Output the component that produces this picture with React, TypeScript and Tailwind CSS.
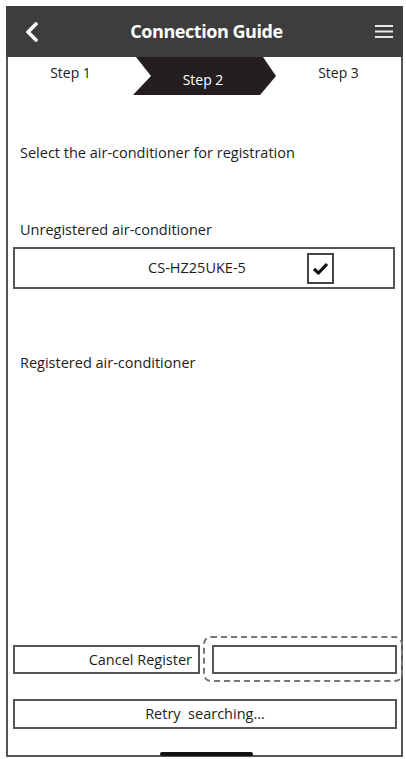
import React from "react";

const font = { fontFamily: '"Open Sans", "Noto Sans", sans-serif' };

const ChevronLeft = () => (
  <svg width="14" height="20" viewBox="0 0 14 20" fill="none">
    <polyline points="11,2 3,10 11,18" stroke="#fff" strokeWidth="3.6" strokeLinecap="round" strokeLinejoin="round" />
  </svg>
);

const Hamburger = () => (
  <svg width="20" height="15" viewBox="0 0 20 15" fill="none">
    <line x1="1" y1="2" x2="19" y2="2" stroke="#e6e6e6" strokeWidth="2" />
    <line x1="1" y1="7.5" x2="19" y2="7.5" stroke="#e6e6e6" strokeWidth="2" />
    <line x1="1" y1="13" x2="19" y2="13" stroke="#e6e6e6" strokeWidth="2" />
  </svg>
);

const StepArrow = () => (
  <svg className="absolute inset-0" width="143" height="38" viewBox="0 0 143 38">
    <polygon points="3,0 130,0 143,19 127,38 0,38 18,19" fill="#231f20" />
  </svg>
);

const CheckBox = () => (
  <div className="flex h-[31px] w-[27px] items-center justify-center border-2 border-[#444] bg-white">
    <svg width="17" height="13" viewBox="0 0 17 13" fill="none">
      <polyline points="2,7 6.5,11 15,2" stroke="#111" strokeWidth="3.2" strokeLinejoin="round" />
    </svg>
  </div>
);

export default function App() {
  return (
    <div className="h-[759px] w-[406px] bg-white pl-[6px] pt-[6px] text-[#1c1c1c]" style={font}>
      <div className="flex h-[751px] w-[397px] flex-col border-x-2 border-b-2 border-[#555]">
        {/* header */}
        <div className="-mx-[2px] flex h-[51px] items-center justify-between bg-[#3d3d3d] pl-[19px] pr-[9px]">
          <ChevronLeft />
          <span className="text-[18px] font-bold tracking-tight text-white">Connection Guide</span>
          <Hamburger />
        </div>

        {/* steps */}
        <div className="flex h-[38px] text-[14px]">
          <div className="flex flex-1 justify-center pt-[5px]">Step 1</div>
          <div className="relative flex w-[143px] justify-center pt-[12px]">
            <StepArrow />
            <span className="relative -ml-[3px] text-white">Step 2</span>
          </div>
          <div className="flex flex-1 justify-center pt-[5px]">Step 3</div>
        </div>

        <div className="flex flex-1 flex-col text-[14.5px]">
          <p className="mt-[48px] pl-[12px] leading-[20px]">Select the air-conditioner for registration</p>
          <p className="mt-[57px] pl-[12px] leading-[20px]">Unregistered air-conditioner</p>
          <div className="ml-[5px] mr-[6px] mt-[7px] flex h-[42px] items-center border-2 border-[#555]">
            <span className="ml-[122px] w-[120px] text-center">CS-HZ25UKE-5</span>
            <div className="ml-[50px]">
              <CheckBox />
            </div>
          </div>
          <p className="mt-[64px] pl-[12px] leading-[20px]">Registered air-conditioner</p>

          <div className="flex-1" />

          <div className="ml-[5px] mr-[4px] flex h-[29px] gap-[12px]">
            <div className="flex w-[187px] items-center justify-end border-2 border-[#555] pr-[6px]">Cancel Register</div>
            <div className="relative flex-1 border-2 border-[#555]">
              <div className="absolute -bottom-[10px] -left-[11px] -right-[8px] -top-[11px] rounded-[8px] border-2 border-dashed border-[#777]" />
            </div>
          </div>

          <div className="mb-[26px] ml-[5px] mr-[4px] mt-[25px] flex h-[30px] items-center justify-center border-2 border-[#555]">
            Retry&nbsp; searching...
          </div>
        </div>
        <div className="relative">
          <div className="absolute left-[152px] top-[-3px] h-[4px] w-[93px] rounded-full bg-[#111]" />
        </div>
      </div>
    </div>
  );
}
